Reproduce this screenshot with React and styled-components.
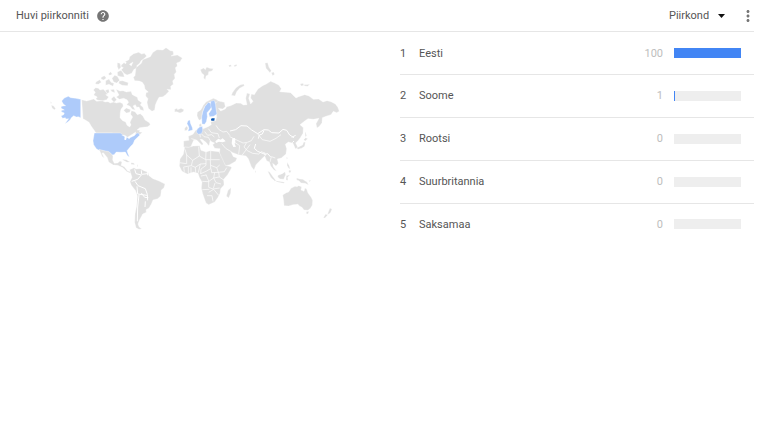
import React, { useState } from 'react';
import styled, { createGlobalStyle } from 'styled-components';
import { MdHelp, MdMoreVert } from 'react-icons/md';

const GlobalStyle = createGlobalStyle`
  * {
    box-sizing: border-box;
  }

  body {
    margin: 0;
    background: #fff;
    color: #555;
    font-family: Roboto, 'Liberation Sans', sans-serif;
    font-size: 11px;
  }
`;

const Widget = styled.section`
  margin-right: 14px;
`;

const Header = styled.header`
  display: flex;
  align-items: center;
  height: 32px;
  padding-left: 16px;
  border-bottom: 1px solid #e6e6e6;
`;

const Title = styled.h1`
  margin: 0;
  font-size: 11px;
  font-weight: 400;
`;

const IconButton = styled.button`
  display: flex;
  padding: 0;
  border: none;
  background: none;
  color: #757575;
  font-size: ${({ $size }) => $size}px;
  cursor: pointer;
`;

const HelpButton = styled(IconButton)`
  margin-left: 7px;
  margin-right: auto;
`;

const MenuButton = styled(IconButton)`
  margin-right: -3px;
`;

const Select = styled.select`
  grid-area: 1 / 1;
  appearance: none;
  width: 56px;
  padding: 0 16px 0 0;
  margin: 0;
  border: none;
  background: none;
  color: inherit;
  font: inherit;
  cursor: pointer;
`;

const SelectBox = styled.label`
  display: grid;
  align-items: center;
  margin-right: 14px;
`;

const Arrow = styled.svg`
  grid-area: 1 / 1;
  justify-self: end;
  width: 7px;
  height: 4px;
  fill: #111;
  pointer-events: none;
`;

const Body = styled.div`
  display: grid;
  grid-template-columns: 400fr 354fr;
  align-items: start;
`;

const MapPane = styled.div`
  padding: 14px 58px 0 48px;
`;

const MapSvg = styled.svg`
  display: block;
  width: 100%;
  fill: #e0e0e0;
  stroke: #fff;
  stroke-width: 1;
  stroke-linejoin: round;
`;

const Table = styled.table`
  width: 100%;
  height: 212px;
  margin-top: 1px;
  border-collapse: collapse;
`;

const Row = styled.tr`
  & + & {
    border-top: 1px solid #e6e6e6;
  }
`;

const Rank = styled.td`
  width: 19px;
  padding: 0;
`;

const Name = styled.th`
  padding: 0;
  font-weight: 400;
  text-align: left;
`;

const Value = styled.td`
  padding: 0 11px 0 0;
  color: #bdbdbd;
  text-align: right;
`;

const BarCell = styled.td`
  width: 80px;
  padding: 0 13px 0 0;
`;

const Track = styled.div`
  height: 10px;
  background: #eee;
`;

const Fill = styled.div`
  height: 100%;
  background: #4285f4;
`;

const rows = [
  { name: 'Eesti', value: 100 },
  { name: 'Soome', value: 1 },
  { name: 'Rootsi', value: 0 },
  { name: 'Suurbritannia', value: 0 },
  { name: 'Saksamaa', value: 0 },
];

// land shapes, grouped so that each group has its own origin on the map
const WorldMap = () => (
  <MapSvg viewBox="0 0 882 552" role="img" aria-label="Huvi piirkonniti">
    {/* North America */}
    <g transform="translate(-24 -18)">
      <path d="M31 184l4 4-2 4zM34 195l7 3 6 8-4 3-7-5z" />
      <path d="M125 179l15 4 11-3 10-3 9 7 17-2 8 4 9-1 7 4 10-3 8 3 11-2 8 4 2 7-7 10-2 9-1 16 8 9 9 4 4 10 8 5 4-6-3-8 3-7 5-9-6-8 2-11 11 3 7 9 9-3 8 8 6 11 13 8 3 6-8 6-14 2-10 1-8 7 9 1-2 5 9 1-8 7-4-3-9 5 1-10-10 7-17 10-9-4-9 2-5-9-12 1-9-4h-48l-6-9-8-11-7-12-11-7-7-4z" />
      <path fill="#aecbfa" d="M65 183l8-9 12-5 7 4 15 2 15 3v55l-7-3-6 1-8-4-7 6-4 7-8 7-7 4 6-8 5-7-8 1-2-4-8 2-5-7 8-4 2-5-9-4 1-4 8-1-9-5-1-5 6-2 8-1-7-5z" />
      <path d="M160 150l7-7 8 2 5 5 10-2 9 8 4 7-6 1 9 7-6 8-11 3-15-1-7-4 5-6-11-6 5-8zM196 151l10-3 2 9-7 4zM211 149l11-1 3 10-9-3zM228 148l12 5 9-1 10 4 14-2 4 10 15 8 2 8 11 8-4 7 8 7 3 10-11-3-4-8-7 1-4-8-7 4 7 12-9-2-7-9-10-5 6-7-5-8-10-4-13 3-9-7 8-6z" />
      <path d="M251 211l8-7 13 5-3 8-10 2zM213 177l9-8 8 10-8 8zM168 126l11-7 5 8-9 6-9-1zM184 112l9-5 6 7-8 6-8-3zM197 122l10-5 6 10 9 3-3 9-12-6-10 3zM216 115l8-9 8 3 7 12-9 8-9-3zM238 123l10-1 17 6-2 9-17-1-10-6zM205 102l7-7 5 8-8 3z" />
      <path d="M245 74l10-9 12-6 2-9 12-9 15-4 9 5 8-2 7 8-8 8-9 6-4 8-9 7 2 7-10 4-7 12-14 5-9-5-8-11 6-6-8-4zM232 68l8 2 3 12-7 7-4-9zM232 96l11-5 7 9 3 11-11-1-9-3z" />
      <path fill="#fff" d="M247 61l12 6-3 5zM268 73l11-7-5 12z" />
    </g>

    {/* Eurasia */}
    <path d="M500 158l12 7 17 4 3 13-8 7-13-2 7 8 14-6 4-7 12-3 17-8 13 1 8 5 11-1-4-19 4-16 9 3-4 13 6 17 7-8-7-10 2-12 9 2 5-8 6-9 14-10 11-5 13-8 12 5 12 6 8 11-5 9 20 2 13 1 9 9 7 7 8-4 18-6 13 4 13 10 16-1 13 9 12-4 12 3 13 7 7 9 5 13-8 4-10-4-7 10-15 5-11 4-1 15-7 10-8 6-3-13 9-16-17 3-16-2-10 7-14 11 10 9-1 17-8 13-7 9-7 7 7 14-8 3-7-16-14-4-9 7 4 13-2 16-14 12-12 3 3 13-7 8-10-8 2 10 10 14-8-4-10-12-4-12-8-4-6-14-10 10-16 16-6 16-8-10-9-24-7-8-23-4-22-8 7 14 11 4-4 10-18 10-14 4-10-20-7-18 2-14-16-1-6-11 6-5-14-6-3 15-9-11-12-9h-6l10 14-4 4-16-16-9 1-10 22-20-2v-18l16-2-2-12 14-6 8-12 12-6v-10l5 8 6 3 14-6 10-6-2-9 15-3 3-12-3-27z" />
    <path fill="#fff" stroke="none" d="M502 286l9-8 7 3 6-4 9 9-9 3-11-2-9 4zM553 277l8-1 1 10-2 8 4 8-8 1-5-11z" />
    <path fill="none" stroke="#fff" strokeWidth="3" d="M546 255l17-4 16-12 18 1 14 12 18 11 19-12 13 1 10 8 22 1 12-11 11 3 9 14 13 8" />
    <path fill="none" stroke="#fff" strokeWidth="2" d="M629 263l14 18 23 5 18-9 15-11M545 272l21 10 19 9 13-2 12-5 8-13M595 291l-7 12 10 11 16 8 18 2 8-7 12 5M606 296l-12 16-12 16M556 286l19 13-3 26M521 293l12 14 18 11M504 238l8 12 13 8 11-2 10 13M481 248l9 12 20 3 4 13M470 257l9 11 12-2 8 7M461 264l7 8 13 2 10 17M430 278l14 4M455 258l2 16M652 330l-2-10M666 348l4-16 12 4" />

    {/* Greenland, Arctic, Nordics */}
    <g transform="translate(246 -18)">
      <path d="M18 83l16-13 4-11 23-9 8-13 12-8 18 1 9-7 13 9 8 1 2 10-8 5 19-3 15 9-7 11-10 4 2 9-6 5 3 13-6 7 2 12-7 8 2 10-8 6 1 10-12-1 6 6-10 10-8 6-12 2-6 11-5 12-2 15-8 4-11-9-4-18 3-11-7-8 1-10 7-2-10-9-2-11-6-9-9-4-14-1-4-10 5-5z" />
      <path d="M134 208l7-3 2 4 10-4 9 4-3 6-9 4-10-4-6 1zM211 89l10-5 5 5 4-8 9 4 11 1-4 7-10 2-1 9-7 4-2 11-5-5 1-9-7-6zM296 76l6-2 3 5-7 2zM311 77l8-4 2 4-7 3z" />
      <path d="M205 237l-4-10 1-10 11-8 7-13 8-10 10-5 12-6 13 6-3 7-8-3-12 1-11 8-6 8-6 16-2 18-6 5z" />
      <path fill="#aecbfa" d="M216 252l-1-20 3-16 7-17 10-12 9 4 1 10-6 8-8 9 1 12-3 15-5 8z" />
      <path fill="#aecbfa" d="M242 184l11-3 4 13 1 13 3 15-10 7-12 1-3-9 9-13-3-12z" />
      <path fill="#aecbfa" d="M174 242l6-2 1 9 6 14 1 7-14 4 3-9-2-7-4-7z" />
      <path d="M164 265l6-7 4 6-3 7-7 1zM207 254l6-4 2 7-6 4z" />
      <path fill="#aecbfa" d="M202 267l7-6 8-2 1 14-4 8-9 2-6-7z" />
      <path fill="#0b57b0" stroke="none" d="M243 237l3-2h8l-1 7h-9z" />
    </g>
    <path d="M550 148l4-9 10-14 12-8 11-3 2 5-14 8-9 10-5 13zM651 51l8-1 4 14 7 10-4 6-12-13zM670 80l7-2 3 7-6 4zM756 114l9-2 3 6-8 2zM768 116l18-1-7 6-10-1z" />

    {/* USA, Mexico and South America */}
    <g transform="translate(96 252)">
      <path fill="#aecbfa" d="M43 9h78l8 6 9 2 4 6 11-1 10-5 8-8 6 1 2 6-15 14-5 12-7 7-11 13 3 9 4 9-5-2-7-12-13 1-14-1-7 8-7 1-9-8-9-3-20-3-8-5-8-12-2-12z" />
      <path fill="#fff" stroke="none" d="M124 15l10 1 7 4-3 10-5-1 1-9zM143 22l11-3-7 9z" />
      <path d="M57 58l19 5 9 1 9 7 5 7-1 12 5 10 10-1 7-6 6 3-3 10 10 4 10 13 10 2-1 5-11-5-12-12-16-7-13-1-14-9-4-13-12-15-4 2 7 14-6-4-5-11zM127 88l12 1 11 7-9 1-11-6zM153 98l9 1 2 5-11-1zM171 103l3 5-3 2z" />
      <path d="M149 119l13-6 6 4 12-1 12 6 12 5 3 10 12 9 18 7 18 9-3 11-8 7-2 18-9 8-14 4-5 12-7 12-9 5 1 8-11 5-5 10-5 9-4 11 3 8 8 7-8 1-9-5-4-16 1-25 5-25 2-29-5-16-13-16-4-11 6-13z" />
      <path fill="none" strokeWidth="3" d="M164 118l4 13 16 4-11 13-18 6M184 121l1 12 17-2M202 126l1 10M165 154l9 13 22 9 6 17 1 18M171 169l2 23 14 2 14 2M177 195l-4 36-1 43M196 214l-1 17M184 189l10 13 11 1" />
    </g>

    {/* Africa */}
    <g transform="translate(351 222)">
      <path d="M59 81l12 1 14-4 19-1 4 14 15 5 12-4 27 3 7 15 12 26 17 4 2 3-12 21-12 14 1 17-10 11-2 14-6 12-10 14-18 8-8-5-10-28-4-17 2-18-8-14-4-12-13-4-19 6-16-8-8-16 2-21 10-14zM189 211l9-8-1 17-6 14-7-6z" />
      <path fill="none" strokeWidth="2" d="M60 88l5 17 18 16 20-13-2-28M103 108l19 11 1-23M122 119h42M137 93v25M83 121l-4 16-23 4M44 128l19 3M65 105v27M79 137l12 5 15-10 17-1M56 141l2 14M70 140v20M78 142v17M91 142l1 16M106 132l-6 26M123 119v17l-15 11-1 15M136 119l1 27-14 8-16 7M137 136l18 7 9-8M155 142l5 15-20 1-2-12M160 157l18-2 7-12M163 171l16 11M149 158l-3 16 17-3-2-14M112 184l18 1 16-11 7 14 15 4M131 185v17l13 5 20-3M112 209l21-1M131 217l15-9 15 18M126 227h15l3 17M123 164l9 21M108 168l16-3M150 189l-5 16" />
    </g>

    {/* Asia Pacific */}
    <g transform="translate(606 252)">
      <path d="M98 195l11-7 7-2 7-11 12-6 6 1 5-3 9 3-2 10 9 4 3-10 5 3 4 12 9 12 5 10-1 14-5 9-8 7-12-1-6-8-8-4-4-5-15 1-13 4-14-1-1-15z" />
      <path d="M169 245l8-1-3 8-5-1zM240 234l6 4-5 11-9 5 4-11zM227 252l6 3-8 9-5-1z" />
      <path d="M53 124l6 2 10 14 9 12-3 2-13-12zM78 152l17 3 10 2-5 3-21-5zM84 136l13-5 8-6 2 9-6 14-11-1-7-6zM109 137l11-3-7 8 1 9-6-1zM140 144l9 3 9 1 13 8 5 9-11-5-12-1-6-7-7-2zM176 152l7-2-4 6zM112 97l5 9 4 12-6-4-4-8zM117 120l7 2-4 7-4-3zM110 80l3 5-3 3zM140 54l10-5 8-4 3-9 5 1-2 12-9 6-11 3zM161 29l6-6 6 3-7 7zM166 5l4 12-4 3-1-11zM15 121l3 4-2 5z" />
      <path fill="none" strokeWidth="3" d="M17 42l-4 13 10 9 22 9 8-2 9 10M42 1l-5 11-9 3-3 11M125 22l12-6M132 33l-5 5" />
    </g>
  </MapSvg>
);

const App = () => {
  const [level, setLevel] = useState('piirkond');

  return (
    <>
      <GlobalStyle />
      <Widget>
        <Header>
          <Title>Huvi piirkonniti</Title>
          <HelpButton type="button" aria-label="Abi" $size={14}>
            <MdHelp />
          </HelpButton>
          <SelectBox>
            <Select
              aria-label="Piirkond"
              value={level}
              onChange={(e) => setLevel(e.target.value)}
            >
              <option value="piirkond">Piirkond</option>
            </Select>
            <Arrow viewBox="0 0 7 4">
              <path d="M0 0h7L3.500 4z" />
            </Arrow>
          </SelectBox>
          <MenuButton type="button" aria-label="Menüü" $size={18}>
            <MdMoreVert />
          </MenuButton>
        </Header>

        <Body>
          <MapPane>
            <WorldMap />
          </MapPane>
          <Table>
            <tbody>
              {rows.map((row, index) => (
                <Row key={row.name}>
                  <Rank>{index + 1}</Rank>
                  <Name scope="row">{row.name}</Name>
                  <Value>{row.value}</Value>
                  <BarCell>
                    <Track>
                      <Fill style={{ width: `${row.value}%` }} />
                    </Track>
                  </BarCell>
                </Row>
              ))}
            </tbody>
          </Table>
        </Body>
      </Widget>
    </>
  );
};

export default App;
